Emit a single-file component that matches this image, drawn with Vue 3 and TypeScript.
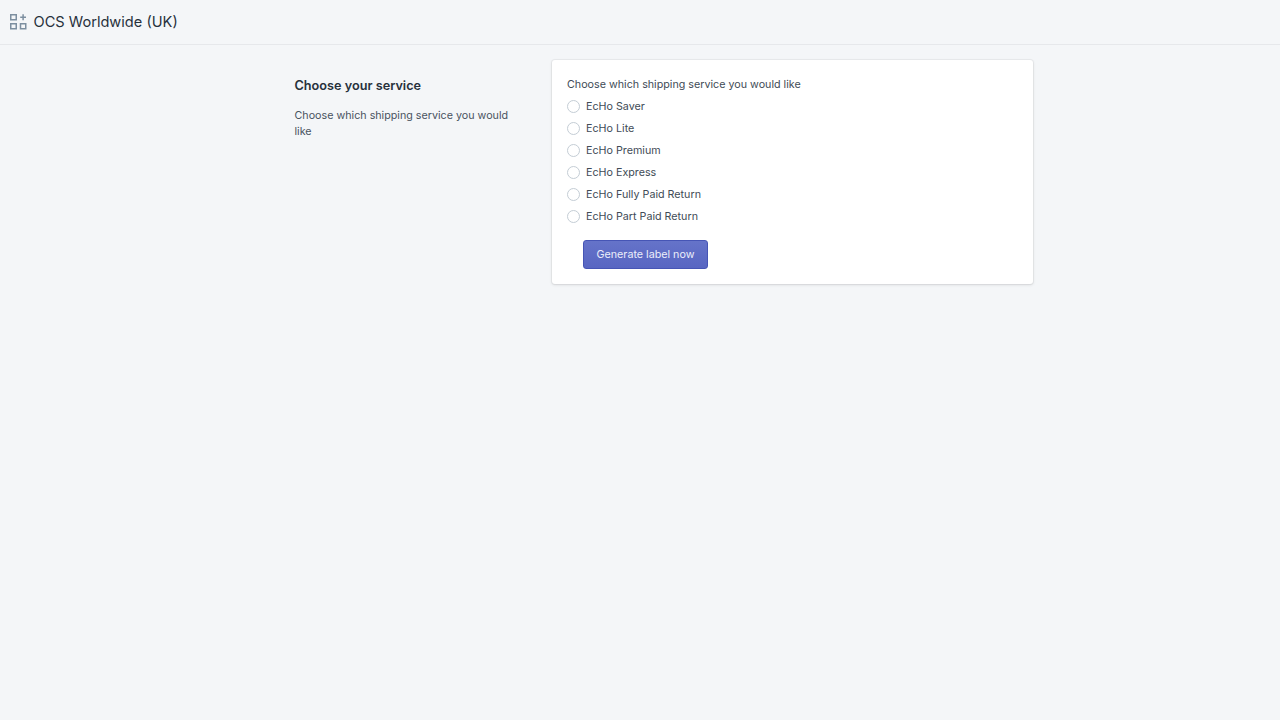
<script setup lang="ts">
const services: string[] = [
  'EcHo Saver',
  'EcHo Lite',
  'EcHo Premium',
  'EcHo Express',
  'EcHo Fully Paid Return',
  'EcHo Part Paid Return',
]
</script>

<template>
  <div class="page">
    <header class="topbar">
      <svg class="logo" width="18" height="18" viewBox="0 0 18 18" fill="none" stroke="#7d8fa0" stroke-width="1.5">
        <rect x="0.75" y="1.75" width="5.5" height="5" />
        <rect x="0.75" y="10.75" width="5.5" height="5" />
        <rect x="10.5" y="10.75" width="5.25" height="5" />
        <path d="M13.1 1.3v6M10.2 4.3h5.8" />
      </svg>
      <h1 class="title">OCS Worldwide (UK)</h1>
    </header>
    <main class="layout">
      <section class="intro">
        <h2 class="heading">Choose your service</h2>
        <p class="desc">Choose which shipping service you would like</p>
      </section>
      <section class="card">
        <div class="legend">Choose which shipping service you would like</div>
        <label v-for="s in services" :key="s" class="option">
          <span class="radio"></span>
          <span>{{ s }}</span>
        </label>
        <button class="btn" type="button">Generate label now</button>
      </section>
    </main>
  </div>
</template>

<style>
html, body { margin: 0; background: #f4f6f8; }
</style>

<style scoped>
.page {
  min-height: 720px;
  background: #f4f6f8;
  font-family: Inter, "Liberation Sans", sans-serif;
  color: #212b36;
}
.topbar {
  height: 45px;
  box-sizing: border-box;
  border-bottom: 1px solid #e6e8eb;
  display: flex;
  align-items: center;
  padding: 0 0 0 10px;
  gap: 5.5px;
}
.logo { flex: none; }
.title {
  margin: 0;
  font-size: 14.6px;
  font-weight: 400;
  line-height: 20px;
  color: #27313c;
}
.layout {
  width: 738.5px;
  margin-left: 294.5px;
  padding-top: 15px;
  display: flex;
  gap: 21.5px;
  align-items: flex-start;
}
.intro { width: 236px; flex: none; padding-top: 16px; }
.heading {
  margin: 0;
  font-size: 12.7px;
  font-weight: 600;
  line-height: 20px;
  color: #27313c;
}
.desc {
  margin: 12px 0 0;
  width: 222px;
  font-size: 10.72px;
  line-height: 16px;
  color: #49535f;
}
.card {
  flex: 1;
  height: 224px;
  box-sizing: border-box;
  background: #fff;
  border-radius: 3px;
  box-shadow: 0 0 0 1px rgba(63,63,68,.05), 0 1px 3px 0 rgba(63,63,68,.15);
  padding: 17px 16px 16px 15px;
  font-size: 10.72px;
  color: #414b56;
}
.legend { line-height: 16px; margin-bottom: 2px; }
.option {
  display: flex;
  align-items: center;
  gap: 6px;
  height: 22px;
}
.radio {
  width: 13px;
  height: 13px;
  box-sizing: border-box;
  border-radius: 50%;
  border: 1px solid #c4cdd5;
  background: #fff;
}
.btn {
  display: block;
  margin: 13px 0 0 16px;
  width: 125px;
  height: 29px;
  border: 1px solid #4655b5;
  border-radius: 3px;
  background: linear-gradient(#6573c9, #5866c2);
  color: #eceefa;
  font: inherit;
  padding: 0;
}
</style>
